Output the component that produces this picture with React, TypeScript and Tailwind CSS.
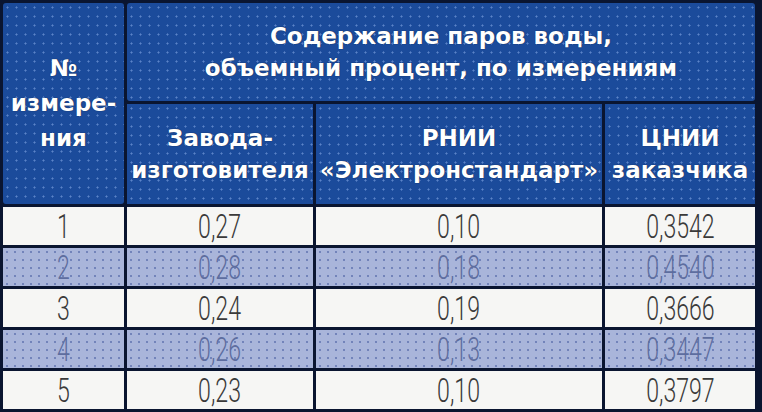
const HEAD_DOTS =
  "bg-[#1b4b9b] bg-[radial-gradient(circle,rgba(170,200,255,0.45)_0.8px,transparent_1.3px)] bg-[length:9px_9px]";
const STRIPE_DOTS =
  "bg-[#a9b5da] bg-[radial-gradient(circle,rgba(70,90,160,0.55)_0.8px,transparent_1.3px)] bg-[length:8px_8px]";

interface Row {
  n: string;
  plant: string;
  rnii: string;
  cnii: string;
}

const ROWS: Row[] = [
  { n: "1", plant: "0,27", rnii: "0,10", cnii: "0,3542" },
  { n: "2", plant: "0,28", rnii: "0,18", cnii: "0,4540" },
  { n: "3", plant: "0,24", rnii: "0,19", cnii: "0,3666" },
  { n: "4", plant: "0,26", rnii: "0,13", cnii: "0,3447" },
  { n: "5", plant: "0,23", rnii: "0,10", cnii: "0,3797" },
];

const headText =
  "font-['DejaVu_Sans',sans-serif] font-bold text-white text-[23px] leading-[32px] tracking-[0px] text-center whitespace-nowrap [text-shadow:0_0_1px_#0a1530]";

function Num({ value, striped }: { value: string; striped: boolean }) {
  return (
    <div
      className={`flex items-center justify-center ${striped ? STRIPE_DOTS : "bg-[#f6f6f4]"}`}
    >
      <span
        className={`inline-block scale-x-[0.68] font-['Roboto',sans-serif] font-light text-[34px] leading-none ${
          striped ? "text-[#5d6d9f]" : "text-[#3a3a3a]"
        }`}
      >
        {value}
      </span>
    </div>
  );
}

export default function App() {
  return (
    <div className="w-[762px] h-[412px] bg-[#0a1530] pl-[3px] pt-[3px] overflow-hidden">
      <div className="grid grid-cols-[121px_186px_286px_150px] grid-rows-[98px_100px_38px_38px_38px_38px_38px] gap-x-[3px] gap-y-[3px]">
        <div className={`row-span-2 rounded-[3px] flex items-center justify-center ${HEAD_DOTS}`}>
          <p className={`${headText} leading-[35px]`}>
            №
            <br />
            измере-
            <br />
            ния
          </p>
        </div>
        <div className={`col-span-3 rounded-[3px] flex items-center justify-center ${HEAD_DOTS}`}>
          <p className={headText}>
            Содержание паров воды,
            <br />
            объемный процент, по измерениям
          </p>
        </div>
        <div className={`flex items-center justify-center ${HEAD_DOTS}`}>
          <p className={headText}>
            Завода-
            <br />
            изготовителя
          </p>
        </div>
        <div className={`flex items-center justify-center ${HEAD_DOTS}`}>
          <p className={headText}>
            РНИИ
            <br />
            «Электронстандарт»
          </p>
        </div>
        <div className={`flex items-center justify-center ${HEAD_DOTS}`}>
          <p className={headText}>
            ЦНИИ
            <br />
            заказчика
          </p>
        </div>

        {ROWS.map((r, i) => {
          const striped = i % 2 === 1;
          return [
            <Num key={`${r.n}-n`} value={r.n} striped={striped} />,
            <Num key={`${r.n}-p`} value={r.plant} striped={striped} />,
            <Num key={`${r.n}-r`} value={r.rnii} striped={striped} />,
            <Num key={`${r.n}-c`} value={r.cnii} striped={striped} />,
          ];
        })}
      </div>
    </div>
  );
}
